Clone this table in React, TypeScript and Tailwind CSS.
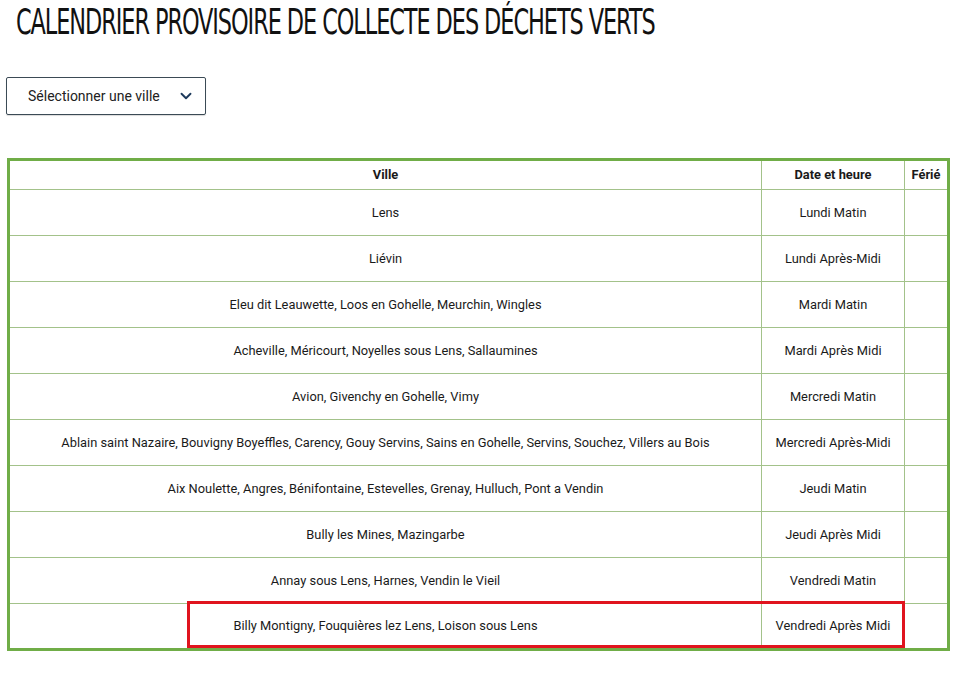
import { ChevronDown } from 'lucide-react'

const rows: { ville: string; date: string }[] = [
  { ville: 'Lens', date: 'Lundi Matin' },
  { ville: 'Liévin', date: 'Lundi Après-Midi' },
  { ville: 'Eleu dit Leauwette, Loos en Gohelle, Meurchin, Wingles', date: 'Mardi Matin' },
  { ville: 'Acheville, Méricourt, Noyelles sous Lens, Sallaumines', date: 'Mardi Après Midi' },
  { ville: 'Avion, Givenchy en Gohelle, Vimy', date: 'Mercredi Matin' },
  {
    ville:
      'Ablain saint Nazaire, Bouvigny Boyeffles, Carency, Gouy Servins, Sains en Gohelle, Servins, Souchez, Villers au Bois',
    date: 'Mercredi Après-Midi',
  },
  { ville: 'Aix Noulette, Angres, Bénifontaine, Estevelles, Grenay, Hulluch, Pont a Vendin', date: 'Jeudi Matin' },
  { ville: 'Bully les Mines, Mazingarbe', date: 'Jeudi Après Midi' },
  { ville: 'Annay sous Lens, Harnes, Vendin le Vieil', date: 'Vendredi Matin' },
  { ville: 'Billy Montigny, Fouquières lez Lens, Loison sous Lens', date: 'Vendredi Après Midi' },
]

function App() {
  return (
    <div className="w-[980px] h-[688px] bg-white text-[#1a1a1a] font-['Roboto',sans-serif] overflow-hidden">
      <h1 className="ml-[16px] pt-[5px] text-[35px] leading-[34px] whitespace-nowrap origin-left scale-x-[0.712] font-['DejaVu_Sans_Condensed','DejaVu_Sans',sans-serif] tracking-[-1.5px] text-[#111]">
        CALENDRIER PROVISOIRE DE COLLECTE DES DÉCHETS VERTS
      </h1>

      <div className="pl-[6px] pt-[38px]">
        <button className="w-[200px] h-[38px] border border-[#3b4a55] rounded-[2px] flex items-center justify-between pl-[21px] pr-[10px] text-[14px] text-[#222] shadow-[0_1px_1px_rgba(0,0,0,0.15)]">
          <span>Sélectionner une ville</span>
          <ChevronDown size={18} strokeWidth={2.5} className="text-[#1d3a5c]" />
        </button>
      </div>

      <div className="pl-[7px] pt-[43px]">
        <div className="relative w-[943px]">
          <table className="w-[943px] border-collapse border-[3px] border-[#70ad47] text-[12.85px] text-center">
            <thead>
              <tr className="h-[30px]">
                <th className="border border-[#a3c28a] font-bold w-[753px]">Ville</th>
                <th className="border border-[#a3c28a] font-bold w-[143px]">Date et heure</th>
                <th className="border border-[#a3c28a] font-bold">Férié</th>
              </tr>
            </thead>
            <tbody>
              {rows.map((r, i) => (
                <tr key={i} className="h-[46px]">
                  <td className="border border-[#a3c28a]">{r.ville}</td>
                  <td className="border border-[#a3c28a]">{r.date}</td>
                  <td className="border border-[#a3c28a]"></td>
                </tr>
              ))}
            </tbody>
          </table>
          {/* highlight around the last row */}
          <div className="absolute left-[180px] top-[443px] w-[718px] h-[47px] border-[3px] border-[#e0141e] pointer-events-none" />
        </div>
      </div>
    </div>
  )
}

export default App
